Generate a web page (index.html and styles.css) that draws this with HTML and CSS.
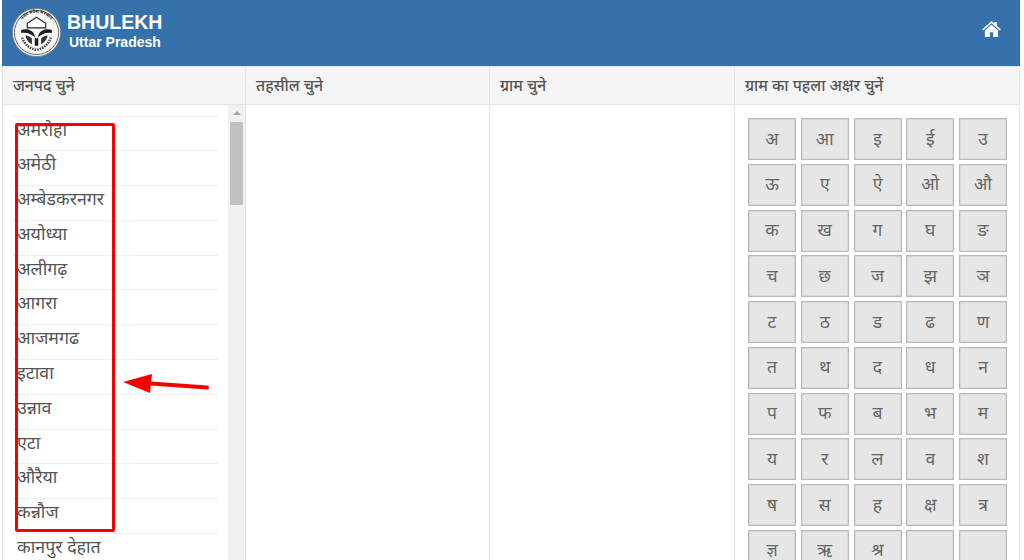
FILE: index.html
```html
<!DOCTYPE html>
<html lang="hi">

<head>
    <meta charset="UTF-8">
    <meta name="viewport" content="width=device-width, initial-scale=1.0">
    <title>Bhulekh Uttar Pradesh</title>
    <link rel="stylesheet" href="styles.css">
</head>

<body>
    <header class="topbar">
        <div class="brand">
            <svg class="emblem" viewBox="0 0 48 48" aria-hidden="true">
                <circle cx="24" cy="24" r="23.6" fill="#f6f6f6" stroke="#777" stroke-width="0.8" />
                <circle cx="24" cy="24" r="21.6" fill="none" stroke="#333" stroke-width="0.7" />
                <path id="ring" d="M6.5 27 A18 18 0 1 1 41.5 27" fill="none" />
                <text class="emblem-text"><textPath href="#ring" startOffset="50%" text-anchor="middle">उत्तर प्रदेश सरकार</textPath></text>
                <path d="M10 29 C12 35 17 40 24 41 C31 40 36 35 38 29" fill="none" stroke="#444" stroke-width="2.4" stroke-dasharray="1.5 1" />
                <path d="M24 9 L33 15 L33 19.5 L15 19.5 L15 15 Z" fill="#fff" stroke="#222" stroke-width="1.1" />
                <path d="M9 21.5 C14 20 20 21 22.3 27 L22.3 37 L25.7 37 L25.7 27 C28 21 34 20 39 21.5 L39 24.5 C34 23.4 29 25 24 30 C19 25 14 23.4 9 24.5 Z" fill="#1c1c1c" />
                <path d="M13 27 C14 31 16 34 19.5 35.5 L19.5 30 C17.5 28 15.5 27 13 27 Z M35 27 C34 31 32 34 28.5 35.5 L28.5 30 C30.5 28 32.5 27 35 27 Z" fill="#333" />
            </svg>
            <div class="brand-text">
                <div class="brand-title">BHULEKH</div>
                <div class="brand-sub">Uttar Pradesh</div>
            </div>
        </div>
        <svg class="home-icon" viewBox="0 0 20 17" aria-hidden="true">
            <path d="M10 0 L13 2.7 L13 1 L15.6 1 L15.6 5 L20 9 L18.8 10.2 L10 2.5 L1.2 10.2 L0 9 Z" fill="#fff" />
            <path d="M3 10.2 L10 4.1 L17 10.2 L17 17 L11.8 17 L11.8 12 L8.2 12 L8.2 17 L3 17 Z" fill="#fff" />
        </svg>
    </header>

    <main class="picker">
        <div class="col-head">जनपद चुने</div>
        <div class="col-head">तहसील चुने</div>
        <div class="col-head">ग्राम चुने</div>
        <div class="col-head">ग्राम का पहला अक्षर चुनें</div>

        <div class="col-body district-col">
            <ul class="district-list">
                <li>अमरोहा</li>
                <li>अमेठी</li>
                <li>अम्बेडकरनगर</li>
                <li>अयोध्या</li>
                <li>अलीगढ़</li>
                <li>आगरा</li>
                <li>आजमगढ</li>
                <li>इटावा</li>
                <li>उन्नाव</li>
                <li>एटा</li>
                <li>औरैया</li>
                <li>कन्नौज</li>
                <li>कानपुर देहात</li>
            </ul>
            <div class="scrollbar">
                <span class="scroll-up"></span>
                <span class="scroll-thumb"></span>
            </div>
        </div>
        <div class="col-body"></div>
        <div class="col-body"></div>
        <div class="col-body letters-col">
            <div class="letters">
                <button>अ</button><button>आ</button><button>इ</button><button>ई</button><button>उ</button>
                <button>ऊ</button><button>ए</button><button>ऐ</button><button>ओ</button><button>औ</button>
                <button>क</button><button>ख</button><button>ग</button><button>घ</button><button>ङ</button>
                <button>च</button><button>छ</button><button>ज</button><button>झ</button><button>ञ</button>
                <button>ट</button><button>ठ</button><button>ड</button><button>ढ</button><button>ण</button>
                <button>त</button><button>थ</button><button>द</button><button>ध</button><button>न</button>
                <button>प</button><button>फ</button><button>ब</button><button>भ</button><button>म</button>
                <button>य</button><button>र</button><button>ल</button><button>व</button><button>श</button>
                <button>ष</button><button>स</button><button>ह</button><button>क्ष</button><button>त्र</button>
                <button>ज्ञ</button><button>ऋ</button><button>श्र</button><button></button><button></button>
            </div>
        </div>
    </main>

    <!-- annotation drawn on top of the screenshot -->
    <div class="mark-box"></div>
    <svg class="mark-arrow" viewBox="0 0 90 20" aria-hidden="true">
        <path d="M84 13.5 L28 9.5" stroke="#f60000" stroke-width="4" stroke-linecap="round" fill="none" />
        <path d="M0 8 L29 0 L27 19 Z" fill="#f60000" />
    </svg>
</body>

</html>
```

FILE: styles.css
```css
html,
body {
    height: 560px;
    overflow: hidden;
}

body {
    margin: 0;
    padding: 0 4px 0 2px;
    font-family: "Noto Sans", "Liberation Sans", Arial, sans-serif;
    background: #fff;
    color: #555;
}

.topbar {
    height: 65.5px;
    box-sizing: border-box;
    background-color: #3572ab;
    display: flex;
    align-items: center;
    justify-content: space-between;
    padding: 0 19px 0 10px;
}

.brand {
    display: flex;
    align-items: center;
    gap: 6px;
}

.emblem {
    width: 49px;
    height: 49px;
}

.emblem-text {
    font-size: 4.6px;
    font-weight: 700;
    fill: #222;
}

.brand-text {
    font-family: "Liberation Sans", Arial, sans-serif;
    font-weight: 700;
    color: #fff;
    margin-top: -5px;
}

.brand-title {
    font-size: 19.5px;
    line-height: 23px;
}

.brand-sub {
    font-size: 14px;
    line-height: 16px;
    margin-left: 2px;
}

.home-icon {
    width: 19px;
    height: 16px;
    margin-top: -7px;
}

.picker {
    display: grid;
    grid-template-columns: 244px 244px 245px 285px;
    grid-template-rows: 39px 1fr;
    height: 494.5px;
}

.col-head {
    box-sizing: border-box;
    background-color: #f5f5f5;
    border: 1px solid #e4e4e4;
    border-left-width: 0;
    padding-left: 10px;
    font-size: 15.7px;
    font-weight: 500;
    line-height: 37px;
    color: #555;
}

.col-head:first-child {
    border-left-width: 1px;
}

.col-body {
    box-sizing: border-box;
    border-right: 1px solid #e4e4e4;
    overflow: hidden;
}

.district-col {
    display: flex;
    justify-content: space-between;
    border-left: 1px solid #e4e4e4;
}

.district-list {
    list-style: none;
    width: 206px;
    margin: 11px 0 0 9px;
    padding: 0;
}

.district-list li {
    height: 34.8px;
    box-sizing: border-box;
    border-top: 1px solid #eee;
    padding-left: 5px;
    font-size: 17.8px;
    line-height: 24px;
    color: #555;
    white-space: nowrap;
}

.scrollbar {
    width: 17px;
    background: #f1f1f1;
    display: flex;
    flex-direction: column;
    align-items: center;
}

.scroll-up {
    width: 0;
    height: 0;
    margin-top: 6px;
    border-left: 4px solid transparent;
    border-right: 4px solid transparent;
    border-bottom: 4px solid #a3a3a3;
}

.scroll-thumb {
    width: 13px;
    height: 83px;
    margin-top: 7px;
    background: #c1c1c1;
}

.letters-col {
    padding: 13.5px 12px 0 13px;
}

.letters {
    display: grid;
    grid-template-columns: repeat(5, 48px);
    grid-auto-rows: 42px;
    column-gap: 4.75px;
    row-gap: 3.75px;
}

.letters button {
    box-sizing: border-box;
    margin: 0;
    padding: 0 0 3px;
    background: #e6e6e6;
    border: 1px solid #bbb;
    box-shadow: inset 0 0 0 0.5px #ccc;
    font-family: inherit;
    font-size: 17.5px;
    color: #666;
}

.mark-box {
    position: absolute;
    left: 15px;
    top: 123px;
    width: 100px;
    height: 409px;
    box-sizing: border-box;
    border: 3px solid #f60000;
    border-radius: 2px;
}

.mark-arrow {
    position: absolute;
    left: 123px;
    top: 374px;
    width: 90px;
    height: 20px;
}
```
